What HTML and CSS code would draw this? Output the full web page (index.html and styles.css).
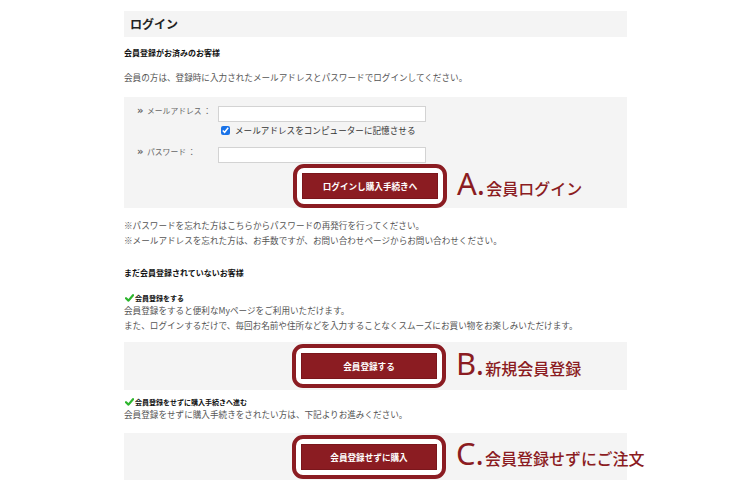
FILE: index.html
```html
<!DOCTYPE html>
<html lang="ja">
<head>
<meta charset="utf-8">
<title>ログイン</title>
<link rel="stylesheet" href="styles.css">
</head>
<body>
<div class="page">
  <h1 class="title">ログイン</h1>
  <h2 class="sub sub-first">会員登録がお済みのお客様</h2>
  <p class="text lead">会員の方は、登録時に入力されたメールアドレスとパスワードでログインしてください。</p>

  <div class="box login-box">
    <div class="row">
      <label class="label"><span class="chev">»</span>メールアドレス ：</label>
      <input class="field" type="text">
    </div>
    <div class="remember">
      <input class="check-input" type="checkbox" checked>
      <span>メールアドレスをコンピューターに記憶させる</span>
    </div>
    <div class="row row-pass">
      <label class="label"><span class="chev">»</span>パスワード ：</label>
      <input class="field" type="password">
    </div>
    <div class="action action-login">
      <div class="frame"><button class="btn">ログインし購入手続きへ</button></div>
      <div class="callout"><span class="mark">A.</span><span class="mark-text">会員ログイン</span></div>
    </div>
  </div>

  <p class="text note note-first">※パスワードを忘れた方はこちらからパスワードの再発行を行ってください。</p>
  <p class="text note">※メールアドレスを忘れた方は、お手数ですが、お問い合わせページからお問い合わせください。</p>

  <h2 class="sub sub-second">まだ会員登録されていないお客様</h2>
  <p class="check-title check-first"><svg class="tick" viewBox="0 0 9 8" width="9" height="8"><path d="M1 4.2 L3.5 6.6 L8 1.2" fill="none" stroke="#2db52d" stroke-width="2.2" stroke-linecap="round" stroke-linejoin="round"/></svg>会員登録をする</p>
  <p class="text">会員登録をすると便利なMyページをご利用いただけます。</p>
  <p class="text">また、ログインするだけで、毎回お名前や住所などを入力することなくスムーズにお買い物をお楽しみいただけます。</p>

  <div class="box action-box box-b">
    <div class="frame"><button class="btn">会員登録する</button></div>
    <div class="callout"><span class="mark">B.</span><span class="mark-text">新規会員登録</span></div>
  </div>

  <p class="check-title check-second"><svg class="tick" viewBox="0 0 9 8" width="9" height="8"><path d="M1 4.2 L3.5 6.6 L8 1.2" fill="none" stroke="#2db52d" stroke-width="2.2" stroke-linecap="round" stroke-linejoin="round"/></svg>会員登録をせずに購入手続きへ進む</p>
  <p class="text">会員登録をせずに購入手続きをされたい方は、下記よりお進みください。</p>

  <div class="box action-box box-c">
    <div class="frame"><button class="btn">会員登録せずに購入</button></div>
    <div class="callout"><span class="mark">C.</span><span class="mark-text">会員登録せずにご注文</span></div>
  </div>
</div>
</body>
</html>
```

FILE: styles.css
```css
* {
  box-sizing: border-box;
  margin: 0;
  padding: 0;
}

body {
  background: #ffffff;
  font-family: "Noto Sans CJK JP", "Noto Sans", sans-serif;
  color: #555555;
}

.page {
  width: 503px;
  margin-left: 124px;
}

.title {
  margin-top: 11px;
  height: 26px;
  padding-left: 6px;
  background: #f4f4f4;
  color: #222222;
  font-size: 12px;
  font-weight: 700;
  line-height: 26px;
}

.sub {
  color: #111111;
  font-size: 8px;
  font-weight: 700;
  line-height: 14px;
}

.sub-first {
  margin-top: 9px;
}

.sub-second {
  margin-top: 18px;
}

.text {
  font-size: 8.6px;
  line-height: 15px;
  color: #555555;
}

.lead {
  margin-top: 10px;
}

.box {
  background: #f4f4f4;
}

.login-box {
  margin-top: 12px;
  padding: 9px 0 0 13px;
}

.row {
  display: flex;
  align-items: flex-start;
  height: 16px;
}

.row-pass {
  margin-top: 9px;
}

.label {
  display: flex;
  align-items: center;
  width: 81px;
  font-size: 7.8px;
  line-height: 10px;
  color: #666666;
  white-space: pre;
}

.chev {
  width: 10px;
  font-family: "DejaVu Sans", sans-serif;
  font-size: 10px;
  font-weight: 700;
  color: #666666;
  letter-spacing: -1px;
}

.field {
  width: 208px;
  height: 16px;
  border: 1px solid #d3d3d3;
  background: #ffffff;
  outline: none;
}

.remember {
  display: flex;
  align-items: center;
  height: 16px;
  padding-left: 84px;
  font-size: 8.6px;
  color: #333333;
}

.check-input {
  width: 9px;
  height: 9px;
  margin: 0 5px 0 0;
  accent-color: #1a73e8;
}

.action {
  display: flex;
  align-items: center;
}

.action-login {
  margin-top: 1px;
  margin-bottom: -1px;
  padding-left: 156px;
}

.frame {
  flex-shrink: 0;
  padding: 5px;
  border: 4px solid #8b1c22;
  border-radius: 11px;
  background: #ffffff;
}

.btn {
  display: block;
  width: 136px;
  height: 26px;
  border: 1px solid #7a161c;
  background: #8b1c22;
  color: #ffffff;
  font-family: "Noto Sans CJK JP", "Noto Sans", sans-serif;
  font-size: 8.6px;
  font-weight: 700;
}

.callout {
  display: flex;
  flex-shrink: 0;
  align-items: baseline;
  margin-left: 10px;
  padding-bottom: 6px;
  color: #8b1c22;
  white-space: nowrap;
}

.mark {
  font-family: "Noto Sans", "Liberation Sans", sans-serif;
  font-size: 31px;
  line-height: 1;
}

.mark-text {
  margin-left: 1px;
  font-family: "Noto Sans CJK JP", sans-serif;
  font-size: 16px;
  font-weight: 500;
  line-height: 1;
}

.note-first {
  margin-top: 11px;
}

.check-title {
  display: flex;
  align-items: center;
  color: #111111;
  font-size: 7px;
  font-weight: 700;
  line-height: 10px;
}

.tick {
  margin: 0 1px 0 1px;
}

.check-first {
  margin-top: 13px;
}

.check-second {
  margin-top: 7px;
}

.action-box {
  display: flex;
  align-items: center;
  padding-left: 168px;
}

.box-b {
  margin-top: 9px;
  height: 48px;
}

.box-c {
  margin-top: 11px;
  height: 47px;
}
```
